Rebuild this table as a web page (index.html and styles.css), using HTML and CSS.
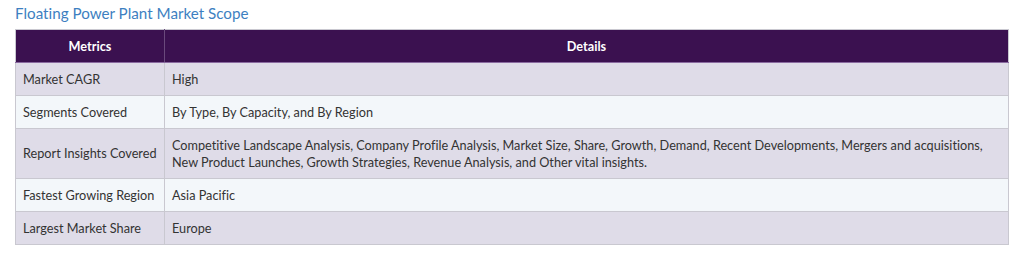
FILE: index.html
```html
<!DOCTYPE html>
<html>
<head>
<meta charset="utf-8">
<link rel="stylesheet" href="styles.css">
</head>
<body>
<div class="wrap">
  <h2 class="title">Floating Power Plant Market Scope</h2>
  <table class="scope">
    <thead>
      <tr><th class="c1">Metrics</th><th>Details</th></tr>
    </thead>
    <tbody>
      <tr class="odd"><td class="c1">Market CAGR</td><td>High</td></tr>
      <tr class="even"><td class="c1">Segments Covered</td><td>By Type, By Capacity, and By Region</td></tr>
      <tr class="odd tall"><td class="c1">Report Insights Covered</td><td>Competitive Landscape Analysis, Company Profile Analysis, Market Size, Share, Growth, Demand, Recent Developments, Mergers and acquisitions,<br>New Product Launches, Growth Strategies, Revenue Analysis, and Other vital insights.</td></tr>
      <tr class="even"><td class="c1">Fastest Growing Region</td><td>Asia Pacific</td></tr>
      <tr class="odd"><td class="c1">Largest Market Share</td><td>Europe</td></tr>
    </tbody>
  </table>
</div>
</body>
</html>
```
FILE: styles.css
```css
html, body { margin: 0; padding: 0; background: #fff; }
body { font-family: Lato, "Open Sans", sans-serif; color: #333; font-variant-ligatures: none; }
.wrap { padding: 3px 16px 0 15px; }
.title {
  margin: 0 0 6px 0;
  font-size: 15.2px;
  font-weight: 400;
  color: #3d7fc1;
  line-height: 20px;
}
.scope {
  width: 994px;
  border-collapse: collapse;
  font-size: 12.7px;
  border: 1px solid #c9c8d0;
}
.scope th {
  background: #3b1150;
  color: #fff;
  font-weight: 700;
  height: 32px;
  padding: 0;
  text-align: center;
  border-left: 1px solid #6a4a7c;
  border-bottom: 1px solid #8a6aa0;
}
.scope th.c1 { border-left: none; }
.scope td {
  padding: 0 7px;
  height: 32px;
  border: 1px solid #c9c8d0;
  line-height: 17px;
}
.scope td.c1 { width: 134px; white-space: nowrap; }
.scope tr.tall td { height: 49px; }
.scope tr.odd td { background: #dfdce8; }
.scope tr.even td { background: #f3f7fa; }
```
